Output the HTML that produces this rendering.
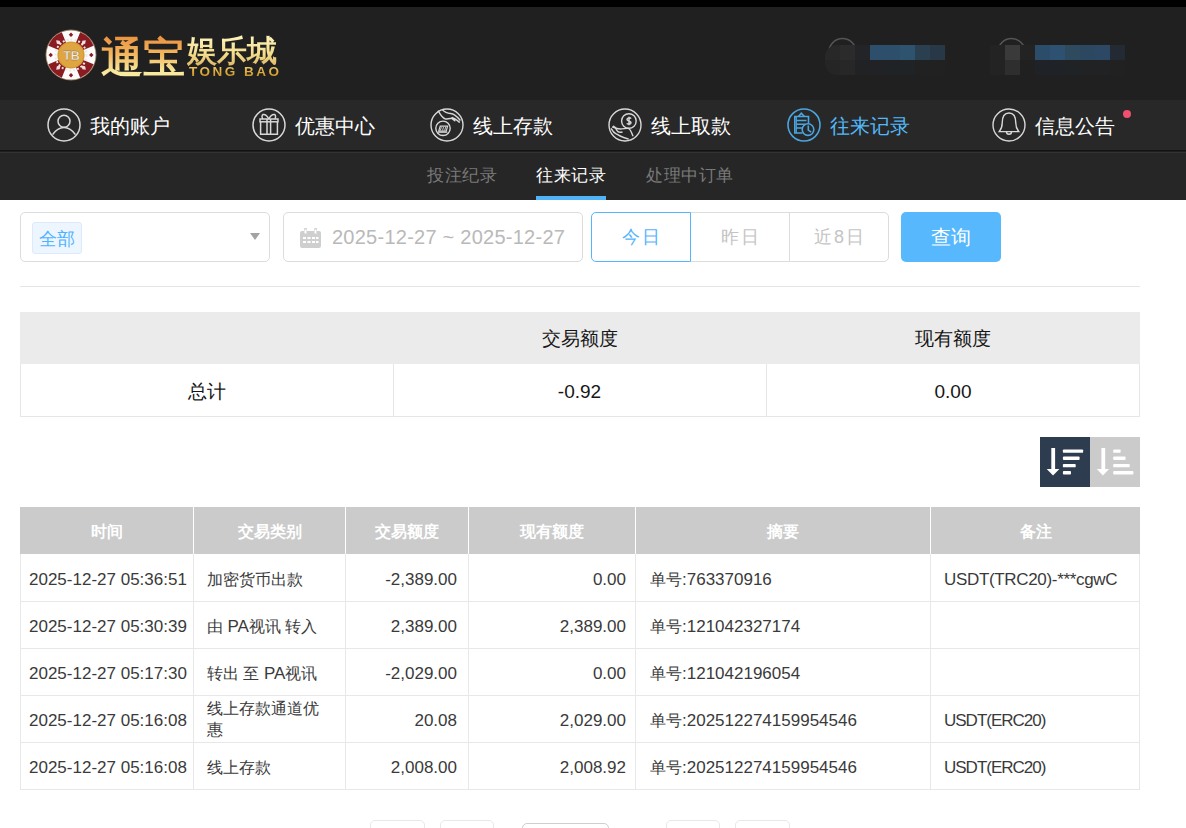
<!DOCTYPE html>
<html><head><meta charset="utf-8">
<style>
*{box-sizing:border-box;margin:0;padding:0}
html,body{width:1186px;height:828px;overflow:hidden;background:#fff;font-family:"Liberation Sans",sans-serif;}
.abs{position:absolute}
#topbar{position:absolute;left:0;top:0;width:1186px;height:7px;background:#000}
#header{position:absolute;left:0;top:7px;width:1186px;height:93px;background:#202020}
#nav{position:absolute;left:0;top:100px;width:1186px;height:50px;background:#282828}
#navline{position:absolute;left:0;top:150px;width:1186px;height:2px;background:linear-gradient(#121212 0 50%,#1f1f1f 50% 100%)}
#navline2{position:absolute;left:0;top:152px;width:1186px;height:1px;background:#333}
#subnav{position:absolute;left:0;top:153px;width:1186px;height:47px;background:#262626}
.ni{position:absolute;top:100px;height:50px;color:#fff;font-size:20px;line-height:50px;white-space:nowrap}
.ni svg{position:absolute;left:0;top:8px}
.ni span{position:absolute;top:1px}
.sn{position:absolute;top:153px;height:47px;line-height:45px;font-size:17px;letter-spacing:0.6px;color:#7a7a7a;white-space:nowrap}
.mz{position:absolute;width:15px;height:15px}
/* filter */
.box{position:absolute;top:212px;height:50px;border:1px solid #dcdcdc;border-radius:5px;background:#fff}
.grp{position:absolute;top:212px;height:50px;line-height:48px;text-align:center;font-size:18px;letter-spacing:2px;padding-left:2px;color:#c4c4c4;border:1px solid #dcdcdc;background:#fff}
/* summary */
.st{position:absolute;font-size:19px;color:#161616;text-align:center;white-space:nowrap}
/* data table */
.th{position:absolute;top:507px;height:47px;line-height:50px;background:#cbcbcb;color:#fff;font-weight:bold;font-size:16px;text-align:center}
.td{position:absolute;font-size:16px;color:#3a3a3a;white-space:nowrap;line-height:49px;height:47px}
.n{font-size:17px}
.vl{position:absolute;width:1px;background:#e8e8e8}
.hl{position:absolute;height:1px;background:#e8e8e8;left:20px;width:1120px}
.pg{position:absolute;top:820px;height:30px;border:1px solid #e8e8e8;border-radius:5px;background:#fff}
</style></head><body>
<div id="topbar"></div>
<div id="header"></div>
<div id="nav"></div>
<div id="navline"></div>
<div id="navline2"></div>
<div id="subnav"></div>

<!-- logo -->
<svg class="abs" style="left:45px;top:29px" width="52" height="52" viewBox="0 0 52 52">
  <circle cx="26" cy="26" r="25.5" fill="#9a7a60"/>
  <circle cx="26" cy="26" r="24.6" fill="#fbfbfb"/>
  <g fill="#8a1b20">
    <path d="M26 26 L16.5 3.5 A24.2 24.2 0 0 1 35.5 3.5 Z" transform="rotate(45 26 26)"/>
    <path d="M26 26 L16.5 3.5 A24.2 24.2 0 0 1 35.5 3.5 Z" transform="rotate(135 26 26)"/>
    <path d="M26 26 L16.5 3.5 A24.2 24.2 0 0 1 35.5 3.5 Z" transform="rotate(225 26 26)"/>
    <path d="M26 26 L16.5 3.5 A24.2 24.2 0 0 1 35.5 3.5 Z" transform="rotate(315 26 26)"/>
    <path d="M26 3.5 l2.2 2.2 l-2.2 2.2 l-2.2 -2.2 Z"/>
    <path d="M26 3.5 l2.2 2.2 l-2.2 2.2 l-2.2 -2.2 Z" transform="rotate(90 26 26)"/>
    <path d="M26 3.5 l2.2 2.2 l-2.2 2.2 l-2.2 -2.2 Z" transform="rotate(180 26 26)"/>
    <path d="M26 3.5 l2.2 2.2 l-2.2 2.2 l-2.2 -2.2 Z" transform="rotate(270 26 26)"/>
  </g>
  <g fill="#fff" opacity="0.85">
    <path d="M26 5 l2 3 l-2 3 l-2 -3 Z" transform="rotate(45 26 26)"/>
    <path d="M26 5 l2 3 l-2 3 l-2 -3 Z" transform="rotate(135 26 26)"/>
    <path d="M26 5 l2 3 l-2 3 l-2 -3 Z" transform="rotate(225 26 26)"/>
    <path d="M26 5 l2 3 l-2 3 l-2 -3 Z" transform="rotate(315 26 26)"/>
  </g>
  <circle cx="26" cy="26" r="15.5" fill="none" stroke="#f0e6e6" stroke-width="2" stroke-dasharray="2 2"/>
  <circle cx="26" cy="26" r="13.6" fill="#d49a36"/>
  <circle cx="26" cy="26" r="12.2" fill="#dfa540"/>
  <text x="26.5" y="30.6" text-anchor="middle" font-family="Liberation Sans" font-weight="bold" font-size="12.5" fill="#f2efe8" stroke="#8a6a30" stroke-width="0.3">TB</text>
</svg>
<div class="abs" style="left:101px;top:32px;font-family:'Liberation Serif',serif;font-weight:600;font-size:42px;line-height:52px;letter-spacing:0px;white-space:nowrap;background:linear-gradient(180deg,#e88a3a 0%,#f2b35a 40%,#f8e79a 75%,#fff2b0 100%);-webkit-background-clip:text;background-clip:text;color:transparent">通宝</div>
<div class="abs" style="left:187px;top:34px;font-family:'Liberation Serif',serif;font-weight:bold;font-size:30px;line-height:34px;white-space:nowrap;background:linear-gradient(180deg,#fff6c0 0%,#f3dc8a 60%,#d9b060 100%);-webkit-background-clip:text;background-clip:text;color:transparent">娱乐城</div>
<div class="abs" style="left:189px;top:65px;font-family:'Liberation Sans',sans-serif;font-weight:bold;font-size:13px;line-height:14px;letter-spacing:2.4px;white-space:nowrap;transform:scaleX(1.04);transform-origin:0 0;background:linear-gradient(180deg,#f0d070 0%,#dca838 55%,#b88020 100%);-webkit-background-clip:text;background-clip:text;color:transparent">TONG BAO</div>

<!-- user mosaic 1 -->
<svg class="abs" style="left:827px;top:37px" width="32" height="20" viewBox="0 0 32 20"><path d="M2 15 A13.5 13.5 0 0 1 29 15" fill="none" stroke="#555" stroke-width="1.6"/></svg>
<div class="mz" style="left:825px;top:45px;background:#282828;border-top-left-radius:12px"></div>
<div class="mz" style="left:840px;top:45px;background:#2b2b2b"></div>
<div class="mz" style="left:855px;top:45px;background:#222427"></div>
<div class="mz" style="left:870px;top:45px;background:#2d4f6c"></div>
<div class="mz" style="left:885px;top:45px;background:#2d4f6b"></div>
<div class="mz" style="left:900px;top:45px;background:#2e536f"></div>
<div class="mz" style="left:915px;top:45px;background:#2a3f50"></div>
<div class="mz" style="left:930px;top:45px;background:#283847"></div>
<div class="mz" style="left:825px;top:60px;background:#252525;border-bottom-left-radius:12px"></div>
<div class="mz" style="left:840px;top:60px;background:#272727"></div>
<div class="mz" style="left:855px;top:60px;background:#212223"></div>
<div class="mz" style="left:870px;top:60px;background:#202225"></div>
<div class="mz" style="left:885px;top:60px;background:#1f2326"></div>
<div class="mz" style="left:900px;top:60px;background:#202326"></div>
<div class="mz" style="left:915px;top:60px;background:#212121"></div>
<div class="mz" style="left:930px;top:60px;background:#212121"></div>
<!-- user mosaic 2 -->
<svg class="abs" style="left:996px;top:37px" width="32" height="20" viewBox="0 0 32 20"><path d="M2 15 A13.5 13.5 0 0 1 29 15" fill="none" stroke="#555" stroke-width="1.6"/></svg>
<div class="mz" style="left:990px;top:45px;background:#232323"></div>
<div class="mz" style="left:1005px;top:45px;background:#3a3a3a"></div>
<div class="mz" style="left:1020px;top:45px;background:#232323"></div>
<div class="mz" style="left:1035px;top:45px;background:#2c4d69"></div>
<div class="mz" style="left:1050px;top:45px;background:#2e5071"></div>
<div class="mz" style="left:1065px;top:45px;background:#2d4a5e"></div>
<div class="mz" style="left:1080px;top:45px;background:#2c4760"></div>
<div class="mz" style="left:1095px;top:45px;background:#2d4864"></div>
<div class="mz" style="left:1110px;top:45px;background:#232a33"></div>
<div class="mz" style="left:990px;top:60px;background:#232323"></div>
<div class="mz" style="left:1005px;top:60px;background:#2e2e2e"></div>
<div class="mz" style="left:1020px;top:60px;background:#202020"></div>
<div class="mz" style="left:1035px;top:60px;background:#1f2327"></div>
<div class="mz" style="left:1050px;top:60px;background:#1f2226"></div>
<div class="mz" style="left:1065px;top:60px;background:#202326"></div>
<div class="mz" style="left:1080px;top:60px;background:#212223"></div>
<div class="mz" style="left:1095px;top:60px;background:#212223"></div>
<div class="mz" style="left:1110px;top:60px;background:#212121"></div>

<!-- nav items -->
<div class="ni" style="left:47px"><svg width="34" height="34" viewBox="0 0 34 34" fill="none" stroke="#d8d8d8" stroke-width="1.5"><circle cx="17" cy="17" r="16"/><circle cx="17" cy="13.3" r="6"/><path d="M5.6 26.6 C9 21.5 13 19.4 17 19.4 C21 19.4 25 21.5 28.4 26.6"/></svg><span style="left:43px">我的账户</span></div>
<div class="ni" style="left:252px"><svg width="34" height="34" viewBox="0 0 34 34" fill="none" stroke="#d8d8d8" stroke-width="1.5"><circle cx="17" cy="17" r="16"/><rect x="8" y="11" width="18" height="2.8"/><path d="M8.6 13.8 V26.3 H25.4 V13.8"/><path d="M15 11 V26.3 M18.6 11 V26.3"/><path d="M16.8 11 C15.5 8.5 13 6 11 6.5 C9.8 7 9.6 9.6 11 11 M16.8 11 C18.1 8.5 20.6 6 22.6 6.5 C23.8 7 24 9.6 22.6 11"/></svg><span style="left:43px">优惠中心</span></div>
<div class="ni" style="left:430px"><svg width="34" height="34" viewBox="0 0 34 34" fill="none" stroke="#d8d8d8" stroke-width="1.4"><circle cx="17" cy="17" r="16"/><path d="M8 2.6 C10 6 12 10 15 10.8 C18 11.5 21 10 23 10.2 C25.5 10.5 27.5 12.5 29.8 14.6"/><path d="M12.3 1.6 C14.5 4 17 5.3 20.5 5.5 C24 5.8 27.5 9 30.4 12.5"/><path d="M21.5 9.5 C23 11 24 12 25.5 12.6" stroke-width="2.4"/><circle cx="13" cy="20.3" r="7.2"/><path d="M8.7 23.2 L10.2 18.2 H17.6 L16.2 23.2 Z" stroke-width="1.2"/><path d="M11.3 19 L10.3 22.5 M13.5 19 L12.5 22.5 M15.7 19 L14.7 22.5" stroke-width="0.9"/><path d="M7.6 24.2 H17.4" stroke-width="1.2"/></svg><span style="left:43px">线上存款</span></div>
<div class="ni" style="left:608px"><svg width="34" height="34" viewBox="0 0 34 34" fill="none" stroke="#d8d8d8" stroke-width="1.4"><circle cx="17" cy="17" r="16"/><circle cx="20.9" cy="13" r="7.3"/><path d="M23 10.6 C22.5 9.6 19 9.4 19 11.4 C19 13.4 23 12.6 23 14.8 C23 16.4 19.5 16.4 18.8 15.4 M21 8.8 V17.2" stroke-width="1.5"/><path d="M4 18.9 C7 20 9.5 21 12.3 21 C15 21 18 20.2 20.2 20.4 C22 20.8 23.5 24 25 28.2"/><path d="M3 20.4 C4.5 23 6 25 8.1 25.8 C11 27.5 14 29.5 17.2 30 C18.6 30.3 19.8 30.8 20.8 31.2"/><path d="M5 18 C6.5 18.5 8 20 9 22.5 C10 24.5 12 24.6 14.5 24" stroke-width="1.6"/></svg><span style="left:43px">线上取款</span></div>
<div class="ni" style="left:787px;color:#52b8f8"><svg width="34" height="34" viewBox="0 0 34 34" fill="none" stroke="#4aa6e0" stroke-width="1.6"><circle cx="17" cy="17" r="16"/><path d="M15.5 25 H7.8 V8.5 H21.5 V15.5"/><path d="M9.3 9 V25" stroke-width="1.2"/><path d="M11.5 8.5 L14.3 5.2 L17.5 8.5"/><path d="M9.3 12.5 H19.5 M9.3 16.2 H18.5 M9.3 20 H15"/><circle cx="21" cy="21.6" r="5.8"/><path d="M21.3 17.6 V22.2 L24.2 24.2"/></svg><span style="left:43px">往来记录</span></div>
<div class="ni" style="left:992px"><svg width="34" height="34" viewBox="0 0 34 34" fill="none" stroke="#d8d8d8" stroke-width="1.4"><circle cx="17" cy="17" r="16"/><path d="M7.2 23.6 C9 21.5 10.2 19 10.2 15 C10.2 8.5 13 5 17 5 C21 5 23.8 8.5 23.8 15 C23.8 19 25 21.5 26.8 23.6 Z"/><path d="M14.5 23.8 A2.5 2.5 0 0 0 19.5 23.8"/></svg><span style="left:43px">信息公告</span></div>
<div class="abs" style="left:1123px;top:110px;width:8px;height:8px;border-radius:50%;background:#f0506e"></div>

<div class="sn" style="left:427px">投注纪录</div>
<div class="sn" style="left:536px;color:#fff">往来记录</div>
<div class="abs" style="left:536px;top:196px;width:70px;height:4px;background:#4fb3f6"></div>
<div class="sn" style="left:646px">处理中订单</div>

<!-- filter row -->
<div class="box" style="left:20px;width:250px"></div>
<div class="abs" style="left:32px;top:222px;width:50px;height:32px;background:#edf5ff;border:1px solid #dbeafc;border-radius:3px;color:#4db3ff;font-size:18px;line-height:33px;text-align:center">全部</div>
<svg class="abs" style="left:250px;top:233px" width="10" height="7" viewBox="0 0 10 7"><path d="M0 0 H10 L5 7 Z" fill="#a3a3a3"/></svg>
<div class="box" style="left:283px;width:300px"></div>
<svg class="abs" style="left:300px;top:228px" width="21" height="20" viewBox="0 0 21 20"><rect x="0" y="3" width="21" height="17" rx="2" fill="#cfcfcf"/><rect x="4" y="0" width="3" height="6" rx="1" fill="#cfcfcf"/><rect x="14" y="0" width="3" height="6" rx="1" fill="#cfcfcf"/><rect x="4.5" y="1.5" width="2" height="4" fill="#fff"/><rect x="14.5" y="1.5" width="2" height="4" fill="#fff"/><g fill="#fff"><rect x="3" y="9" width="3" height="2"/><rect x="7.5" y="9" width="3" height="2"/><rect x="12" y="9" width="3" height="2"/><rect x="3" y="13" width="3" height="2"/><rect x="7.5" y="13" width="3" height="2"/><rect x="12" y="13" width="3" height="2"/><rect x="16" y="9" width="2.5" height="2"/><rect x="16" y="13" width="2.5" height="2"/></g></svg>
<div class="abs" style="left:332px;top:212px;height:50px;line-height:50px;font-size:20px;color:#b9b9b9;letter-spacing:0.25px;white-space:nowrap">2025-12-27 ~ 2025-12-27</div>
<div class="grp" style="left:690px;width:100px;border-left:none">昨日</div>
<div class="grp" style="left:789px;width:100px;border-top-right-radius:5px;border-bottom-right-radius:5px">近8日</div>
<div class="grp" style="left:591px;width:100px;border-color:#55b5fd;color:#55b5fd;border-top-left-radius:5px;border-bottom-left-radius:5px">今日</div>
<div class="abs" style="left:901px;top:212px;width:100px;height:50px;background:#57b8fd;border-radius:5px;color:#fff;font-size:20px;line-height:50px;text-align:center">查询</div>

<div class="abs" style="left:20px;top:286px;width:1120px;height:1px;background:#e6e6e6"></div>

<!-- summary table -->
<div class="abs" style="left:20px;top:312px;width:1120px;height:52px;background:#ebebeb"></div>
<div class="abs" style="left:20px;top:364px;width:1120px;height:53px;border:1px solid #e6e6e6;border-top:none"></div>
<div class="abs" style="left:393px;top:364px;width:1px;height:52px;background:#e6e6e6"></div>
<div class="abs" style="left:766px;top:364px;width:1px;height:52px;background:#e6e6e6"></div>
<div class="st" style="left:393px;top:312px;width:373px;line-height:54px">交易额度</div>
<div class="st" style="left:766px;top:312px;width:374px;line-height:54px">现有额度</div>
<div class="st" style="left:20px;top:364px;width:373px;line-height:55px">总计</div>
<div class="st" style="left:393px;top:364px;width:373px;line-height:55px">-0.92</div>
<div class="st" style="left:766px;top:364px;width:374px;line-height:55px">0.00</div>

<!-- sort buttons -->
<svg class="abs" style="left:1040px;top:437px" width="100" height="50" viewBox="0 0 100 50">
  <rect x="0" y="0" width="50" height="50" fill="#2e3c50"/>
  <rect x="50" y="0" width="50" height="50" fill="#cbcbcb"/>
  <g fill="#fff">
    <rect x="11.3" y="11" width="3.8" height="22"/><path d="M6.7 32 H19.4 L13.05 38.5 Z"/>
    <rect x="22.9" y="12.4" width="20.2" height="3.4" rx="0.9"/>
    <rect x="22.9" y="19.6" width="16.7" height="3.4" rx="0.9"/>
    <rect x="22.9" y="26.9" width="12.8" height="3.4" rx="0.9"/>
    <rect x="22.9" y="34" width="8.1" height="3.4" rx="0.9"/>
    <rect x="61.4" y="11" width="3.8" height="22"/><path d="M56.8 32 H69.1 L62.95 38.5 Z"/>
    <rect x="73.2" y="12.4" width="7.4" height="3.4" rx="0.9"/>
    <rect x="73.2" y="19.6" width="12.4" height="3.4" rx="0.9"/>
    <rect x="73.2" y="26.9" width="16.5" height="3.4" rx="0.9"/>
    <rect x="73.2" y="34" width="20.2" height="3.4" rx="0.9"/>
  </g>
</svg>

<!-- data table -->
<div class="th" style="left:20px;width:173px">时间</div>
<div class="th" style="left:194px;width:151px">交易类别</div>
<div class="th" style="left:346px;width:122px">交易额度</div>
<div class="th" style="left:469px;width:166px">现有额度</div>
<div class="th" style="left:636px;width:294px">摘要</div>
<div class="th" style="left:931px;width:209px">备注</div>

<div class="vl" style="left:20px;top:554px;height:236px"></div>
<div class="vl" style="left:193px;top:554px;height:236px"></div>
<div class="vl" style="left:345px;top:554px;height:236px"></div>
<div class="vl" style="left:468px;top:554px;height:236px"></div>
<div class="vl" style="left:635px;top:554px;height:236px"></div>
<div class="vl" style="left:930px;top:554px;height:236px"></div>
<div class="vl" style="left:1139px;top:554px;height:236px"></div>
<div class="hl" style="top:601px"></div>
<div class="hl" style="top:648px"></div>
<div class="hl" style="top:695px"></div>
<div class="hl" style="top:742px"></div>
<div class="hl" style="top:789px"></div>

<!-- row 1 -->
<div class="td n" style="left:29px;top:555px">2025-12-27 05:36:51</div>
<div class="td" style="left:207px;top:555px">加密货币出款</div>
<div class="td n" style="left:345px;width:112px;text-align:right;top:555px">-2,389.00</div>
<div class="td n" style="left:468px;width:158px;text-align:right;top:555px">0.00</div>
<div class="td" style="left:650px;top:555px">单号<span class="n">:763370916</span></div>
<div class="td n" style="left:944px;top:555px;letter-spacing:-0.33px">USDT(TRC20)-***cgwC</div>
<!-- row 2 -->
<div class="td n" style="left:29px;top:602px">2025-12-27 05:30:39</div>
<div class="td" style="left:207px;top:602px">由 <span class="n">PA</span>视讯 转入</div>
<div class="td n" style="left:345px;width:112px;text-align:right;top:602px">2,389.00</div>
<div class="td n" style="left:468px;width:158px;text-align:right;top:602px">2,389.00</div>
<div class="td" style="left:650px;top:602px">单号<span class="n">:121042327174</span></div>
<!-- row 3 -->
<div class="td n" style="left:29px;top:649px">2025-12-27 05:17:30</div>
<div class="td" style="left:207px;top:649px">转出 至 <span class="n">PA</span>视讯</div>
<div class="td n" style="left:345px;width:112px;text-align:right;top:649px">-2,029.00</div>
<div class="td n" style="left:468px;width:158px;text-align:right;top:649px">0.00</div>
<div class="td" style="left:650px;top:649px">单号<span class="n">:121042196054</span></div>
<!-- row 4 -->
<div class="td n" style="left:29px;top:696px">2025-12-27 05:16:08</div>
<div class="td" style="left:207px;top:699px;line-height:20.5px;height:41px">线上存款通道优<br>惠</div>
<div class="td n" style="left:345px;width:112px;text-align:right;top:696px">20.08</div>
<div class="td n" style="left:468px;width:158px;text-align:right;top:696px">2,029.00</div>
<div class="td" style="left:650px;top:696px">单号<span class="n">:202512274159954546</span></div>
<div class="td n" style="left:944px;top:696px;letter-spacing:-1px">USDT(ERC20)</div>
<!-- row 5 -->
<div class="td n" style="left:29px;top:743px">2025-12-27 05:16:08</div>
<div class="td" style="left:207px;top:743px">线上存款</div>
<div class="td n" style="left:345px;width:112px;text-align:right;top:743px">2,008.00</div>
<div class="td n" style="left:468px;width:158px;text-align:right;top:743px">2,008.92</div>
<div class="td" style="left:650px;top:743px">单号<span class="n">:202512274159954546</span></div>
<div class="td n" style="left:944px;top:743px;letter-spacing:-1px">USDT(ERC20)</div>

<!-- pagination -->
<div class="pg" style="left:370px;width:55px"></div>
<div class="pg" style="left:440px;width:54px"></div>
<div class="pg" style="left:522px;top:823px;width:87px;border-color:#cfcfcf"></div>
<div class="pg" style="left:666px;width:54px"></div>
<div class="pg" style="left:735px;width:55px"></div>

</body></html>
